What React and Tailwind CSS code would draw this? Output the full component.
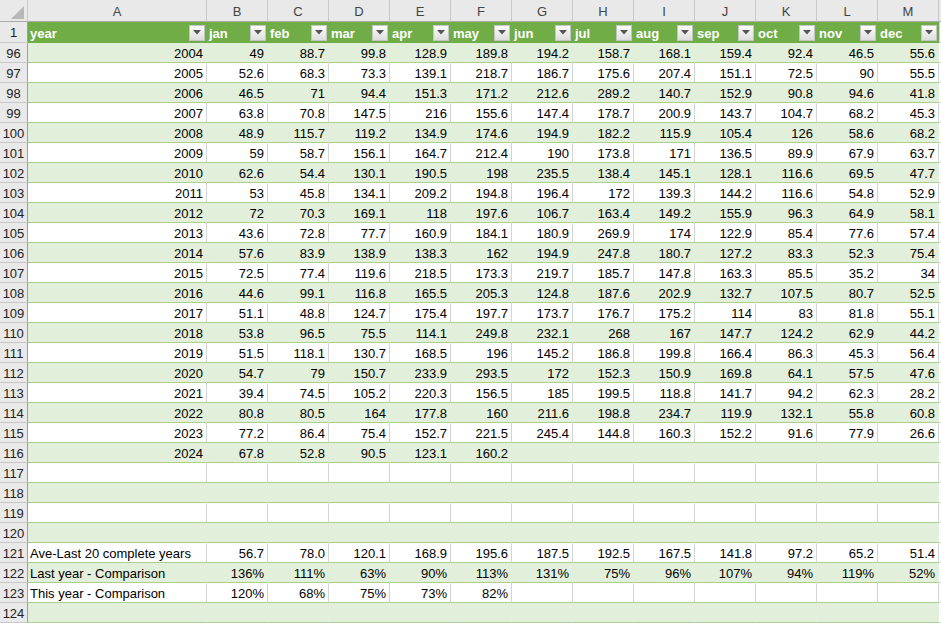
import React from "react";

const COLS = ["A", "B", "C", "D", "E", "F", "G", "H", "I", "J", "K", "L", "M"];
const HEAD = ["year", "jan", "feb", "mar", "apr", "may", "jun", "jul", "aug", "sep", "oct", "nov", "dec"];

const DATA = [
  [96, "2004", "49", "88.7", "99.8", "128.9", "189.8", "194.2", "158.7", "168.1", "159.4", "92.4", "46.5", "55.6"],
  [97, "2005", "52.6", "68.3", "73.3", "139.1", "218.7", "186.7", "175.6", "207.4", "151.1", "72.5", "90", "55.5"],
  [98, "2006", "46.5", "71", "94.4", "151.3", "171.2", "212.6", "289.2", "140.7", "152.9", "90.8", "94.6", "41.8"],
  [99, "2007", "63.8", "70.8", "147.5", "216", "155.6", "147.4", "178.7", "200.9", "143.7", "104.7", "68.2", "45.3"],
  [100, "2008", "48.9", "115.7", "119.2", "134.9", "174.6", "194.9", "182.2", "115.9", "105.4", "126", "58.6", "68.2"],
  [101, "2009", "59", "58.7", "156.1", "164.7", "212.4", "190", "173.8", "171", "136.5", "89.9", "67.9", "63.7"],
  [102, "2010", "62.6", "54.4", "130.1", "190.5", "198", "235.5", "138.4", "145.1", "128.1", "116.6", "69.5", "47.7"],
  [103, "2011", "53", "45.8", "134.1", "209.2", "194.8", "196.4", "172", "139.3", "144.2", "116.6", "54.8", "52.9"],
  [104, "2012", "72", "70.3", "169.1", "118", "197.6", "106.7", "163.4", "149.2", "155.9", "96.3", "64.9", "58.1"],
  [105, "2013", "43.6", "72.8", "77.7", "160.9", "184.1", "180.9", "269.9", "174", "122.9", "85.4", "77.6", "57.4"],
  [106, "2014", "57.6", "83.9", "138.9", "138.3", "162", "194.9", "247.8", "180.7", "127.2", "83.3", "52.3", "75.4"],
  [107, "2015", "72.5", "77.4", "119.6", "218.5", "173.3", "219.7", "185.7", "147.8", "163.3", "85.5", "35.2", "34"],
  [108, "2016", "44.6", "99.1", "116.8", "165.5", "205.3", "124.8", "187.6", "202.9", "132.7", "107.5", "80.7", "52.5"],
  [109, "2017", "51.1", "48.8", "124.7", "175.4", "197.7", "173.7", "176.7", "175.2", "114", "83", "81.8", "55.1"],
  [110, "2018", "53.8", "96.5", "75.5", "114.1", "249.8", "232.1", "268", "167", "147.7", "124.2", "62.9", "44.2"],
  [111, "2019", "51.5", "118.1", "130.7", "168.5", "196", "145.2", "186.8", "199.8", "166.4", "86.3", "45.3", "56.4"],
  [112, "2020", "54.7", "79", "150.7", "233.9", "293.5", "172", "152.3", "150.9", "169.8", "64.1", "57.5", "47.6"],
  [113, "2021", "39.4", "74.5", "105.2", "220.3", "156.5", "185", "199.5", "118.8", "141.7", "94.2", "62.3", "28.2"],
  [114, "2022", "80.8", "80.5", "164", "177.8", "160", "211.6", "198.8", "234.7", "119.9", "132.1", "55.8", "60.8"],
  [115, "2023", "77.2", "86.4", "75.4", "152.7", "221.5", "245.4", "144.8", "160.3", "152.2", "91.6", "77.9", "26.6"],
  [116, "2024", "67.8", "52.8", "90.5", "123.1", "160.2", "", "", "", "", "", "", ""],
  [117, "", "", "", "", "", "", "", "", "", "", "", "", ""],
  [118, "", "", "", "", "", "", "", "", "", "", "", "", ""],
  [119, "", "", "", "", "", "", "", "", "", "", "", "", ""],
  [120, "", "", "", "", "", "", "", "", "", "", "", "", ""],
  [121, "Ave-Last 20 complete years", "56.7", "78.0", "120.1", "168.9", "195.6", "187.5", "192.5", "167.5", "141.8", "97.2", "65.2", "51.4"],
  [122, "Last year - Comparison", "136%", "111%", "63%", "90%", "113%", "131%", "75%", "96%", "107%", "94%", "119%", "52%"],
  [123, "This year - Comparison", "120%", "68%", "75%", "73%", "82%", "", "", "", "", "", "", ""],
  [124, "", "", "", "", "", "", "", "", "", "", "", "", ""],
];

const FONT = { fontFamily: '"Liberation Sans", Arial, sans-serif' };

function FilterButton() {
  return (
    <div className="w-[16px] h-[16px] shrink-0 mr-[1px] border border-[#c4c4c4] bg-gradient-to-b from-[#fdfdfd] to-[#dedede] flex items-center justify-center">
      <svg width="8" height="5" viewBox="0 0 8 5">
        <polygon points="0,0 8,0 4,4.5" fill="#555555" />
      </svg>
    </div>
  );
}

function Row({ row }) {
  const num = row[0];
  const green = num % 2 === 0;
  const cells = row.slice(1);
  const isLabel = num >= 121;
  return (
    <div className={`flex h-[20px] ${green ? "bg-[#e2efda]" : "bg-white"}`}>
      <div className="w-[28px] shrink-0 h-full bg-[#e9e9e9] border-r border-b border-r-[#9e9e9e] border-b-[#c8c8c8] text-center text-[13px] text-[#222] pt-[2px] leading-[17px]">
        {num}
      </div>
      {cells.map((v, i) => {
        const w = i === 0 ? "w-[179px]" : "w-[61px]";
        const align = i === 0 && isLabel ? "text-left pl-[2px]" : "text-right pr-[3px]";
        const vline = green ? "border-r-transparent" : "border-r-[#d4d4d4]";
        return (
          <div
            key={i}
            className={`${w} shrink-0 h-full border-r border-b border-b-[#a9d08e] ${vline} ${align} text-[13px] text-black pt-[2px] leading-[17px] whitespace-nowrap`}
          >
            {v}
          </div>
        );
      })}
      <div className="flex-1 h-full bg-white border-b border-b-[#d4d4d4]" />
    </div>
  );
}

export default function App() {
  return (
    <div className="w-[941px] h-[623px] overflow-hidden bg-white" style={FONT}>
      {/* column letters */}
      <div className="flex h-[22px] bg-[#e9e9e9]">
        <div className="w-[28px] shrink-0 h-full border-r border-b border-r-[#c8c8c8] border-b-[#ababab] flex items-end justify-end pr-[2px] pb-[1px]">
          <svg width="14" height="14" viewBox="0 0 14 14">
            <polygon points="0,13 13,13 13,0" fill="#b8b8b8" />
          </svg>
        </div>
        {COLS.map((c, i) => (
          <div
            key={c}
            className={`${i === 0 ? "w-[179px]" : "w-[61px]"} shrink-0 h-full border-r border-b border-r-[#c8c8c8] border-b-[#ababab] text-center text-[13px] text-[#444] pt-[3px] leading-[17px]`}
          >
            {c}
          </div>
        ))}
        <div className="flex-1 h-full border-b border-b-[#ababab]" />
      </div>
      {/* header row 1 */}
      <div className="flex h-[21px] bg-[#70ad47]">
        <div className="w-[28px] shrink-0 h-full bg-[#e9e9e9] border-r border-b border-r-[#9e9e9e] border-b-[#c8c8c8] text-center text-[13px] text-[#222] pt-[2px] leading-[17px]">
          1
        </div>
        {HEAD.map((h, i) => (
          <div
            key={h}
            className={`${i === 0 ? "w-[179px]" : "w-[61px]"} shrink-0 h-full flex items-center justify-between pl-[2px] pr-[1px]`}
          >
            <span className="text-[13px] font-bold text-white leading-[17px] pt-[1px]">{h}</span>
            <FilterButton />
          </div>
        ))}
        <div className="flex-1 h-full bg-white border-b border-b-[#d4d4d4] border-l border-l-[#d4d4d4]" />
      </div>
      {DATA.map((r) => (
        <Row key={r[0]} row={r} />
      ))}
    </div>
  );
}
